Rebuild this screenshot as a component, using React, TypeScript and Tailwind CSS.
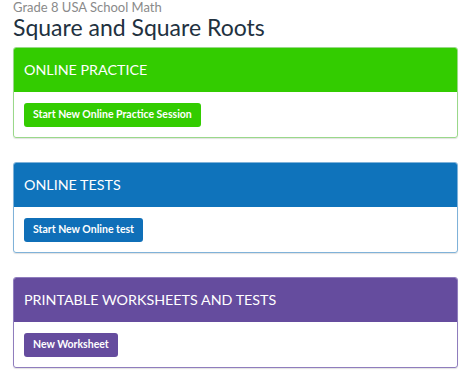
import React from 'react';

interface Section {
  title: string;
  button: string;
  head: string;
  border: string;
  btn: string;
}

const sections: Section[] = [
  {
    title: 'ONLINE PRACTICE',
    button: 'Start New Online Practice Session',
    head: 'bg-[#33cc00]',
    border: 'border-[#9ad88a]',
    btn: 'bg-[#33cc00]',
  },
  {
    title: 'ONLINE TESTS',
    button: 'Start New Online test',
    head: 'bg-[#0f73bb]',
    border: 'border-[#7fb2d9]',
    btn: 'bg-[#0f6fb8]',
  },
  {
    title: 'PRINTABLE WORKSHEETS AND TESTS',
    button: 'New Worksheet',
    head: 'bg-[#654c9e]',
    border: 'border-[#8f7dbd]',
    btn: 'bg-[#654c9e]',
  },
];

export default function App() {
  return (
    <div className="w-[470px] h-[385px] overflow-hidden bg-white pl-[13px] pr-[12px] font-['Lato','Noto_Sans',sans-serif]">
      <div className="text-[13px] leading-[14px] text-[#8a8a8a]">Grade 8 USA School Math</div>
      <h1 className="text-[23px] leading-[26px] text-[#22313f]">Square and Square Roots</h1>

      <div className="mt-[7px] flex flex-col gap-[24px]">
        {sections.map((s) => (
          <div
            key={s.title}
            className={`rounded-[3px] border ${s.border} shadow-[0_1px_1px_rgba(0,0,0,0.12)] overflow-hidden`}
          >
            <div className={`${s.head} h-[44px] flex items-center px-[10px] text-white text-[14.3px]`}>
              {s.title}
            </div>
            <div className="h-[45px] flex items-center px-[10px]">
              <button
                className={`${s.btn} text-white text-[10.5px] font-bold h-[24px] px-[9px] rounded-[3px] leading-none`}
              >
                {s.button}
              </button>
            </div>
          </div>
        ))}
      </div>
    </div>
  );
}
